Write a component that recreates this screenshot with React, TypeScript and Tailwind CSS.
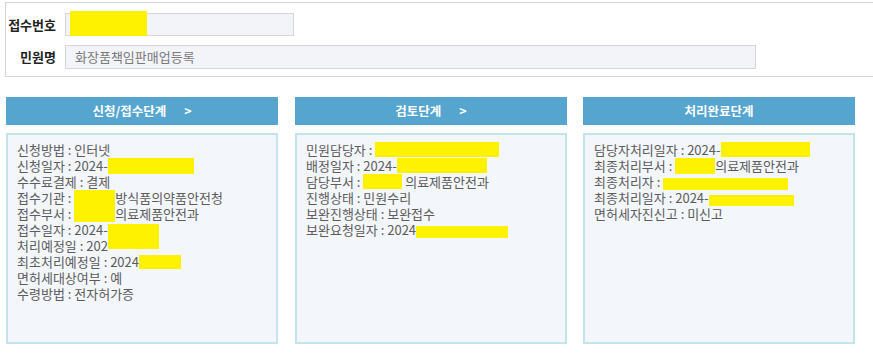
import type { ReactNode } from "react";

const Y = ({ className }: { className: string }) => (
  <span className={`inline-block bg-[#fff200] ${className}`} />
);

function Stage({ title, arrow, children }: { title: string; arrow?: boolean; children: ReactNode }) {
  return (
    <div className="w-[272px] shrink-0">
      <div className="flex h-[28px] items-center justify-center bg-[#55a5cf] text-[12.5px] font-bold text-white">
        <span>{title}</span>
        {arrow && <span className="ml-[18px]">&gt;</span>}
      </div>
      <div className="mt-[8px] h-[211px] border-2 border-[#c3e4ec] bg-[#f3f6fa] px-[9px] pt-[7px] text-[13px] leading-[16px] text-[#5c5c5c]">
        {children}
      </div>
    </div>
  );
}

const Line = ({ children }: { children: ReactNode }) => (
  <div className="h-[16px] whitespace-nowrap">{children}</div>
);

export default function App() {
  return (
    <div className="h-[360px] w-[873px] overflow-hidden bg-white font-['Malgun_Gothic','Noto_Sans_CJK_KR',sans-serif]">
      {/* 접수 정보 */}
      <div className="ml-[5px] mt-[2px] h-[75px] border-y border-l border-[#d5d5d5] pt-[10px]">
        <div className="flex h-[23px] items-center">
          <div className="w-[50px] text-right text-[13px] font-bold text-[#222]">접수번호</div>
          <div className="relative ml-[9px] h-[23px] w-[229px] border border-[#d6d6d6] bg-[#f2f4f9]">
            <span className="absolute left-[4px] top-[-3px] h-[25px] w-[77px] bg-[#fff200]" />
          </div>
        </div>
        <div className="mt-[9px] flex h-[24px] items-center">
          <div className="w-[50px] text-right text-[13px] font-bold text-[#222]">민원명</div>
          <div className="ml-[9px] flex h-[24px] w-[691px] items-center border border-[#d6d6d6] bg-[#f2f4f9] pl-[9px] text-[13px] text-[#7a7a7a]">
            화장품책임판매업등록
          </div>
        </div>
      </div>

      {/* 단계 */}
      <div className="ml-[6px] mt-[20px] flex">
        <Stage title="신청/접수단계" arrow>
          <Line>신청방법 : 인터넷</Line>
          <Line>신청일자 : 2024-<Y className="h-[16px] w-[86px] align-top" /></Line>
          <Line>수수료결제 : 결제</Line>
          <Line>접수기관 : <Y className="h-[16px] w-[41px] align-top" />방식품의약품안전청</Line>
          <Line>접수부서 : <Y className="h-[16px] w-[41px] align-top" />의료제품안전과</Line>
          <Line>접수일자 : 2024-<Y className="h-[14px] w-[51px] align-bottom" /></Line>
          <Line>처리예정일 : 202<Y className="h-[11px] w-[51px] align-top" /></Line>
          <Line>최초처리예정일 : 2024<Y className="mt-[1px] h-[14px] w-[42px] align-top" /></Line>
          <Line>면허세대상여부 : 예</Line>
          <Line>수령방법 : 전자허가증</Line>
        </Stage>
        <div className="w-[17px] shrink-0" />
        <Stage title="검토단계" arrow>
          <Line>민원담당자 : <Y className="h-[15px] w-[124px] align-top" /></Line>
          <Line>배정일자 : 2024-<Y className="h-[15px] w-[90px] align-top" /></Line>
          <Line>담당부서 : <Y className="h-[15px] w-[39px] align-top" /> 의료제품안전과</Line>
          <Line>진행상태 : 민원수리</Line>
          <Line>보완진행상태 : 보완접수</Line>
          <Line>보완요청일자 : 2024<Y className="h-[12px] w-[92px] align-bottom" /></Line>
        </Stage>
        <div className="w-[16px] shrink-0" />
        <Stage title="처리완료단계">
          <Line>담당자처리일자 : 2024-<Y className="h-[15px] w-[89px] align-top" /></Line>
          <Line>최종처리부서 : <Y className="h-[16px] w-[40px] align-top" />의료제품안전과</Line>
          <Line>최종처리자 : <Y className="h-[12px] w-[125px] align-bottom" /></Line>
          <Line>최종처리일자 : 2024-<Y className="h-[11px] w-[85px] align-bottom" /></Line>
          <Line>면허세자진신고 : 미신고</Line>
        </Stage>
      </div>
    </div>
  );
}
